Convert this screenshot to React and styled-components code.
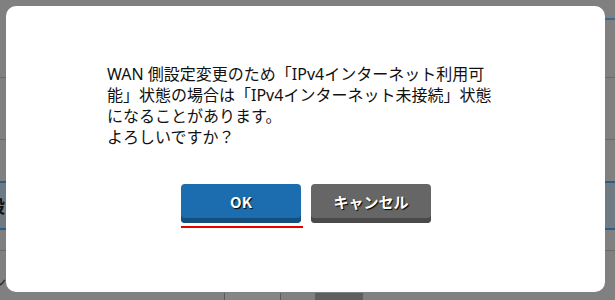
import React from "react";
import styled, { createGlobalStyle } from "styled-components";

const GlobalStyle = createGlobalStyle`
  html, body {
    margin: 0;
    padding: 0;
  }
  body {
    font-family: "Noto Sans", "Noto Sans CJK JP", sans-serif;
  }
`;

const Page = styled.div`
  position: relative;
  width: 615px;
  height: 300px;
  overflow: hidden;
  background: #808080;
  display: flex;
  flex-direction: column;
`;

const Band = styled.div`
  height: ${(p) => p.h}px;
  flex-shrink: 0;
  border-bottom: ${(p) => (p.line ? "1px solid #6a6a6a" : "none")};
  box-sizing: border-box;
  display: flex;
  justify-content: flex-end;
  align-items: flex-end;
`;

const EdgeRule = styled.div`
  width: 12px;
  height: 2px;
  background: #3a6a92;
`;

const BlueBand = styled.div`
  height: 49px;
  flex-shrink: 0;
  box-sizing: border-box;
  border-top: 2px solid #2c5d84;
  border-bottom: 2px solid #2c5d84;
  background: #6f7a83;
  display: flex;
  align-items: center;
`;

const BandLabel = styled.span`
  margin-left: -12px;
  font-family: "Noto Sans CJK JP", sans-serif;
  font-weight: 700;
  font-size: 17px;
  color: #111;
`;

const LowRow = styled.div`
  height: 42px;
  flex-shrink: 0;
  display: flex;
  align-items: flex-end;
  padding-bottom: 2px;
  box-sizing: border-box;
`;

const SideText = styled.span`
  margin-left: -8px;
  font-family: "Noto Sans CJK JP", sans-serif;
  font-size: 14px;
  color: #222;
`;

const BottomStrip = styled.div`
  flex: 1;
  display: flex;
`;

const Cell = styled.div`
  width: ${(p) => p.w}px;
  flex-shrink: 0;
  background: ${(p) => p.bg || "transparent"};
  border-left: ${(p) => (p.edge ? "1px solid #5a5a5a" : "none")};
`;

const Overlay = styled.div`
  position: absolute;
  inset: 0;
  padding: 6px 10px 8px 6px;
  display: flex;
`;

const Dialog = styled.div`
  flex: 1;
  background: #fff;
  border-radius: 10px;
  padding: 58px 0 0 101px;
  display: flex;
  flex-direction: column;
`;

const Message = styled.p`
  margin: 0;
  font-family: "Noto Sans", "Noto Sans CJK JP", sans-serif;
  font-size: 16px;
  line-height: 21px;
  color: #111;
  white-space: nowrap;
`;

const Actions = styled.div`
  margin: 36px 0 0 74px;
  display: flex;
  align-items: flex-start;
  gap: 8px;
`;

const Focus = styled.div`
  display: flex;
  flex-direction: column;
  gap: 3px;
`;

const FocusLine = styled.div`
  width: 122px;
  height: 2px;
  background: #e60000;
`;

const Button = styled.button`
  width: 120px;
  height: 39px;
  border: none;
  border-radius: 4px;
  padding: 0 0 4px;
  background: ${(p) => (p.primary ? "#1b6db0" : "#666666")};
  box-shadow: inset 0 -5px 0 ${(p) => (p.primary ? "#184e7b" : "#4a4a4a")};
  color: #fff;
  font-family: "Noto Sans CJK JP", sans-serif;
  font-weight: 700;
  font-size: 15px;
  text-shadow: 1px 1px 1px #000;
  cursor: pointer;
`;

export default function App() {
  return (
    <>
      <GlobalStyle />
      <Page>
        <Band h={20}>
          <EdgeRule />
        </Band>
        <Band h={58} line />
        <Band h={62} line />
        <Band h={41} />
        <BlueBand>
          <BandLabel>設</BandLabel>
        </BlueBand>
        <Band h={21} line />
        <LowRow>
          <SideText>ン</SideText>
        </LowRow>
        <BottomStrip>
          <Cell w={224} />
          <Cell w={55} edge bg="#868686" />
          <Cell w={34} edge />
          <Cell w={48} bg="#5e5e5e" />
        </BottomStrip>
        <Overlay>
          <Dialog>
            <Message>
              WAN 側設定変更のため「IPv4インターネット利用可
              <br />
              能」状態の場合は「IPv4インターネット未接続」状態
              <br />
              になることがあります。
              <br />
              よろしいですか？
            </Message>
            <Actions>
              <Focus>
                <Button primary>OK</Button>
                <FocusLine />
              </Focus>
              <Button>キャンセル</Button>
            </Actions>
          </Dialog>
        </Overlay>
      </Page>
    </>
  );
}
